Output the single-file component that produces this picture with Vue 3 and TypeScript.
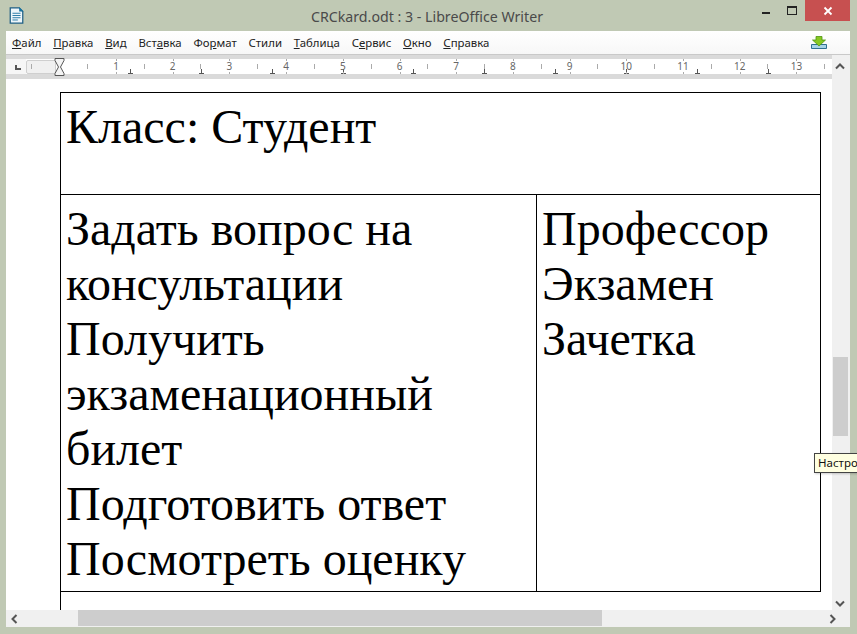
<script setup lang="ts">
const menus = [
  { pre: '', key: 'Ф', post: 'айл' },
  { pre: '', key: 'П', post: 'равка' },
  { pre: '', key: 'В', post: 'ид' },
  { pre: 'Вст', key: 'а', post: 'вка' },
  { pre: 'Фо', key: 'р', post: 'мат' },
  { pre: 'Стили', key: '', post: '' },
  { pre: '', key: 'Т', post: 'аблица' },
  { pre: 'С', key: 'е', post: 'рвис' },
  { pre: '', key: 'О', post: 'кно' },
  { pre: '', key: 'С', post: 'правка' },
]
const numbers = Array.from({ length: 13 }, (_, i) => ({ n: i + 1, x: 110 + i * 56.7 }))
const halves = Array.from({ length: 14 }, (_, i) => 81 + i * 56.7)
const tabs = Array.from({ length: 10 }, (_, i) => 124 + i * 70.85)
const leftLines = ['Задать вопрос на', 'консультации', 'Получить', 'экзаменационный', 'билет', 'Подготовить ответ', 'Посмотреть оценку']
const rightLines = ['Профессор', 'Экзамен', 'Зачетка']
</script>

<template>
  <div class="window">
    <header class="titlebar">
      <svg class="appicon" width="15" height="17" viewBox="0 0 16 19">
        <path d="M1 1h10l4 4v13H1z" fill="#eef6fb" stroke="#1f5f86" stroke-width="1.4" />
        <path d="M11 0l5 5h-5z" fill="#18739f" />
        <path d="M3.5 7h9M3.5 9.5h9M3.5 12h9M3.5 14.5h6" stroke="#2d7ca8" stroke-width="1.1" />
      </svg>
      <span class="title">CRCkard.odt : 3 - LibreOffice Writer</span>
      <div class="controls">
        <span class="min"></span>
        <span class="max"></span>
        <span class="close">
          <svg width="10" height="10" viewBox="0 0 10 10">
            <path d="M1.5 1.5l7 7M8.5 1.5l-7 7" stroke="#fff" stroke-width="1.8" />
          </svg>
        </span>
      </div>
    </header>

    <div class="body">
      <nav class="menubar">
        <span v-for="m in menus" :key="m.pre + m.key + m.post" class="menu">{{ m.pre }}<u>{{ m.key }}</u>{{ m.post }}</span>
        <svg class="update" width="16" height="13" viewBox="0 0 16 13">
          <path d="M.5 8.500h15v4H.5z" fill="#a7d3e6" stroke="#2f6f8f" stroke-width="1" />
          <path d="M5 .5h6v3.500h3.500L8 10 1.500 4H5z" fill="#86c820" stroke="#4f9410" stroke-width="0.8" />
        </svg>
      </nav>

      <div class="rulerrow">
        <div class="ruler">
          <span class="lead"><i class="corner"></i></span>
          <span class="margin"><i class="mtick"></i></span>
          <svg class="indent" width="11" height="18" viewBox="0 0 11 18">
            <path d="M1 .5h9v2L6.500 9 10 15.500v2H1v-2L4.500 9 1 2.500z" fill="#f4f4f4" stroke="#555" stroke-width="1" />
          </svg>
          <div class="scale">
            <span v-for="h in halves" :key="h" class="half" :style="{ left: h + 'px' }"></span>
            <span v-for="t in tabs" :key="t" class="tab" :style="{ left: t + 'px' }"></span>
            <span v-for="n in numbers" :key="n.n" class="num" :style="{ left: n.x + 'px' }">{{ n.n }}</span>
          </div>
        </div>
        <div class="ruler-side"></div>
      </div>

      <div class="main">
        <div class="doc">
          <div class="table">
            <div class="head">Класс: Студент</div>
            <div class="cell left">
              <div v-for="l in leftLines" :key="l">{{ l }}</div>
            </div>
            <div class="cell right">
              <div v-for="l in rightLines" :key="l">{{ l }}</div>
            </div>
          </div>
          <div class="next"></div>
        </div>
        <div class="vscroll">
          <svg class="arrow up" width="10" height="7" viewBox="0 0 10 7"><path d="M1 5.500l4-4 4 4" fill="none" stroke="#555" stroke-width="2" /></svg>
          <span class="vthumb"></span>
          <svg class="arrow down" width="10" height="7" viewBox="0 0 10 7"><path d="M1 1.500l4 4 4-4" fill="none" stroke="#555" stroke-width="2" /></svg>
        </div>
      </div>

      <div class="hscroll">
        <svg class="harrow" width="7" height="10" viewBox="0 0 7 10"><path d="M5.500 1l-4 4 4 4" fill="none" stroke="#555" stroke-width="2" /></svg>
        <span class="hthumb"></span>
        <svg class="harrow" width="7" height="10" viewBox="0 0 7 10"><path d="M1.500 1l4 4-4 4" fill="none" stroke="#555" stroke-width="2" /></svg>
      </div>
    </div>

    <div class="tooltip">Настро</div>
  </div>
</template>

<style>
html, body { margin: 0; overflow: hidden; }
</style>

<style scoped>
.window {
  position: relative;
  width: 857px;
  height: 634px;
  box-sizing: border-box;
  overflow: hidden;
  background: #c0c9b4;
  display: flex;
  flex-direction: column;
  padding: 0 7px 7px 6px;
  font-family: "Noto Sans", sans-serif;
}
.titlebar {
  height: 31px;
  flex: none;
  display: flex;
  position: relative;
  justify-content: center;
  align-items: center;
}
.appicon { position: absolute; left: 3px; top: 7px; }
.title { font-size: 14.2px; color: #4a4a4a; margin-top: 1px; margin-left: -2px; }
.controls {
  position: absolute;
  right: 0;
  top: 0;
  display: flex;
  align-items: flex-start;
}
.min { width: 8px; height: 2px; background: #222; margin-top: 12px; margin-right: 17px; }
.max { width: 8px; height: 6px; border: 1px solid #222; border-top-width: 2px; margin-top: 6px; margin-right: 8px; }
.close {
  width: 45px;
  height: 21px;
  background: #c75050;
  display: flex;
  align-items: center;
  justify-content: center;
}
.body { flex: 1; display: flex; flex-direction: column; background: #fff; min-height: 0; }
.menubar {
  height: 23px;
  flex: none;
  display: flex;
  align-items: center;
  gap: 11.8px;
  padding-left: 6px;
  border-bottom: 1px solid #c9c9c9;
  background: linear-gradient(#fff, #f7f7f7);
  font-size: 11.4px;
  color: #222;
  position: relative;
}
.update { position: absolute; right: 23px; top: 5px; }
.rulerrow { height: 24px; flex: none; display: flex; }
.ruler {
  flex: 1;
  position: relative;
  background: #fff;
  border-top: 4px solid #dadada;
  border-bottom: 5px solid #dadada;
  display: flex;
  min-width: 0;
}
.lead {
  position: absolute;
  left: 0;
  top: 0;
  width: 20px;
  height: 15px;
  background: #f6f6f6;
}
.corner {
  position: absolute;
  left: 9px;
  top: 6px;
  width: 6px;
  height: 5px;
  border-left: 2px solid #555;
  border-bottom: 2px solid #555;
  box-sizing: border-box;
}
.margin {
  position: absolute;
  left: 20px;
  top: 1px;
  width: 30px;
  height: 14px;
  background: #f0f0f0;
  border: 1px solid #cfcfcf;
  border-radius: 2px;
  box-sizing: border-box;
}
.mtick { position: absolute; left: 4px; top: 3px; width: 1px; height: 5px; background: #aaa; }
.indent { position: absolute; left: 48px; top: -1px; }
.scale { position: absolute; inset: 0; }
.half { position: absolute; top: 5px; width: 1px; height: 5px; background: #aaa; }
.tab {
  position: absolute;
  top: 10px;
  width: 1px;
  height: 5px;
  background: #555;
}
.tab::after {
  content: "";
  position: absolute;
  left: -2px;
  bottom: 0;
  width: 5px;
  height: 1px;
  background: #555;
}
.num { position: absolute; top: 0; width: 0; font-size: 10px; line-height: 15px; color: #666; display: flex; justify-content: center; }
.num::before, .num::after {
  content: "";
  position: absolute;
  left: 0;
  width: 1px;
  height: 2px;
  background: #aaa;
}
.num::before { top: 0; }
.num::after { top: 13px; }
.ruler-side { width: 18px; background: #f0f0f0; }
.main { flex: 1; display: flex; min-height: 0; }
.doc {
  flex: 1;
  min-width: 0;
  background: #fff;
  padding: 13px 0 0 54px;
  overflow: hidden;
  position: relative;
}
.table {
  width: 761px;
  box-sizing: border-box;
  border: 1px solid #000;
  display: grid;
  grid-template-columns: 476px 1fr;
  grid-template-rows: 102px 396px;
  font-family: "Liberation Serif", serif;
  font-size: 48px;
  line-height: 55px;
  color: #000;
}
.head {
  grid-column: 1 / 3;
  padding: 6px 0 0 5px;
  border-bottom: 1px solid #000;
}
.cell { padding: 6px 0 0 5px; white-space: nowrap; }
.left { border-right: 1px solid #000; }
.next { border-left: 1px solid #000; height: 20px; width: 0; }
.vscroll {
  width: 18px;
  flex: none;
  background: #f0f0f0;
  position: relative;
  display: flex;
  flex-direction: column;
  align-items: center;
  justify-content: space-between;
  padding: 0 2px 0 0;
  box-sizing: border-box;
}
.arrow.up { position: absolute; top: -16px; left: 3px; }
.arrow.down { position: absolute; bottom: 3px; left: 3px; }
.vthumb { position: absolute; top: 278px; left: 1px; width: 15px; height: 79px; background: #cdcdcd; }
.hscroll {
  height: 17px;
  flex: none;
  background: #f0f0f0;
  display: flex;
  align-items: center;
  justify-content: space-between;
  padding: 0 14px 0 5px;
  position: relative;
}
.hthumb { position: absolute; left: 72px; top: 0; width: 524px; height: 16px; background: #cdcdcd; }
.tooltip {
  position: absolute;
  left: 814px;
  top: 453px;
  width: 80px;
  height: 20px;
  box-sizing: border-box;
  background: #ffffe1;
  border: 1px solid #444;
  padding-left: 3px;
  font-size: 11.5px;
  line-height: 18px;
  color: #111;
  white-space: nowrap;
  box-shadow: 1px 1px 2px rgba(0, 0, 0, 0.2);
}
</style>
